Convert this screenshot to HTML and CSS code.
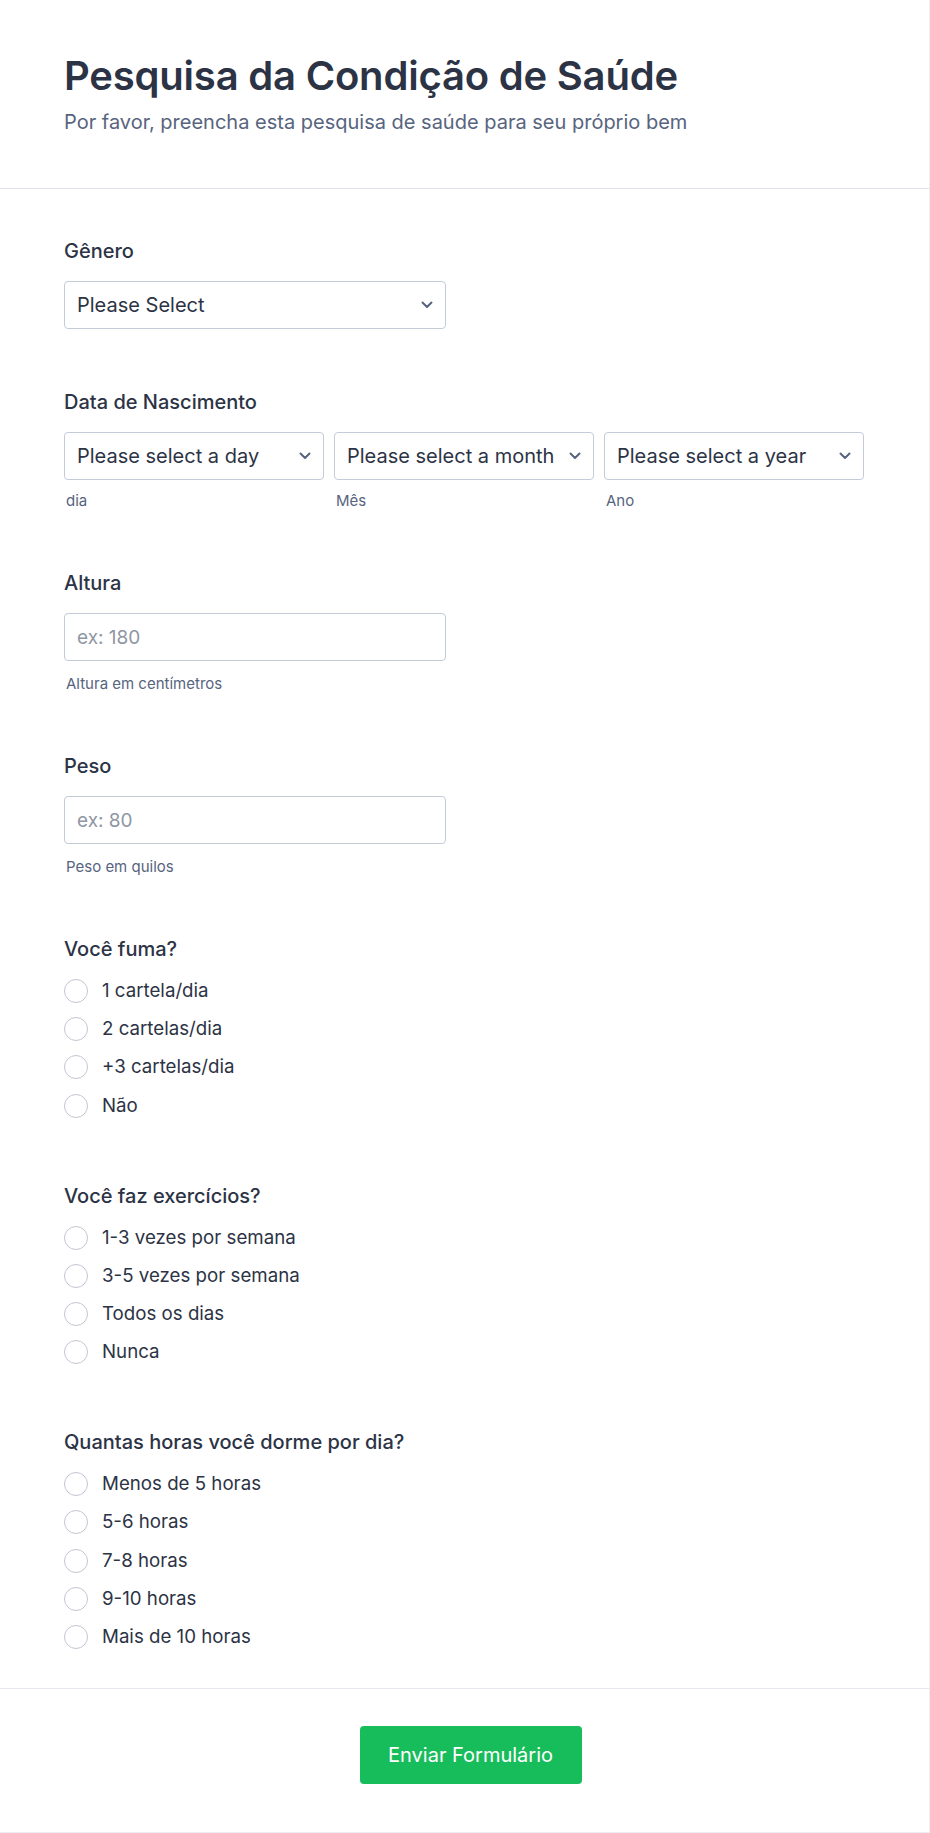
FILE: index.html
```html
<!DOCTYPE html>
<html lang="pt">
<head>
<meta charset="utf-8">
<title>Pesquisa da Condição de Saúde</title>
<link rel="stylesheet" href="styles.css">
</head>
<body>
<div class="card">
  <header class="header">
    <h1 class="title">Pesquisa da Condição de Saúde</h1>
    <p class="subtitle">Por favor, preencha esta pesquisa de saúde para seu próprio bem</p>
  </header>

  <form class="form">
    <div class="q">
      <label class="q-label">Gênero</label>
      <div class="select-wrap w-half">
        <select class="select"><option>Please Select</option></select>
        <svg class="chev" viewBox="0 0 12 8" width="12" height="8"><polyline points="1.5,1.5 6,6 10.5,1.5"/></svg>
      </div>
    </div>

    <div class="q">
      <label class="q-label">Data de Nascimento</label>
      <div class="date-grid">
        <div class="date-col">
          <div class="select-wrap">
            <select class="select"><option>Please select a day</option></select>
            <svg class="chev" viewBox="0 0 12 8" width="12" height="8"><polyline points="1.5,1.5 6,6 10.5,1.5"/></svg>
          </div>
          <span class="sub sub-date">dia</span>
        </div>
        <div class="date-col">
          <div class="select-wrap">
            <select class="select"><option>Please select a month</option></select>
            <svg class="chev" viewBox="0 0 12 8" width="12" height="8"><polyline points="1.5,1.5 6,6 10.5,1.5"/></svg>
          </div>
          <span class="sub sub-date">Mês</span>
        </div>
        <div class="date-col">
          <div class="select-wrap">
            <select class="select"><option>Please select a year</option></select>
            <svg class="chev" viewBox="0 0 12 8" width="12" height="8"><polyline points="1.5,1.5 6,6 10.5,1.5"/></svg>
          </div>
          <span class="sub sub-date">Ano</span>
        </div>
      </div>
    </div>

    <div class="q">
      <label class="q-label">Altura</label>
      <input class="input w-half" type="text" placeholder="ex: 180">
      <span class="sub sub-input">Altura em centímetros</span>
    </div>

    <div class="q">
      <label class="q-label">Peso</label>
      <input class="input w-half" type="text" placeholder="ex: 80">
      <span class="sub sub-input">Peso em quilos</span>
    </div>

    <div class="q">
      <label class="q-label">Você fuma?</label>
      <div class="radios">
        <label class="opt"><span class="radio"></span>1 cartela/dia</label>
        <label class="opt"><span class="radio"></span>2 cartelas/dia</label>
        <label class="opt"><span class="radio"></span>+3 cartelas/dia</label>
        <label class="opt"><span class="radio"></span>Não</label>
      </div>
    </div>

    <div class="q">
      <label class="q-label">Você faz exercícios?</label>
      <div class="radios">
        <label class="opt"><span class="radio"></span>1-3 vezes por semana</label>
        <label class="opt"><span class="radio"></span>3-5 vezes por semana</label>
        <label class="opt"><span class="radio"></span>Todos os dias</label>
        <label class="opt"><span class="radio"></span>Nunca</label>
      </div>
    </div>

    <div class="q">
      <label class="q-label">Quantas horas você dorme por dia?</label>
      <div class="radios">
        <label class="opt"><span class="radio"></span>Menos de 5 horas</label>
        <label class="opt"><span class="radio"></span>5-6 horas</label>
        <label class="opt"><span class="radio"></span>7-8 horas</label>
        <label class="opt"><span class="radio"></span>9-10 horas</label>
        <label class="opt"><span class="radio"></span>Mais de 10 horas</label>
      </div>
    </div>
  </form>

  <footer class="footer">
    <button class="submit" type="button">Enviar Formulário</button>
  </footer>
</div>
</body>
</html>
```

FILE: styles.css
```css
* { box-sizing: border-box; }

html, body {
  margin: 0;
  padding: 0;
  background: #ffffff;
}

body {
  font-family: Inter, "Noto Sans", "Liberation Sans", sans-serif;
  color: #2c3345;
}

.card {
  width: 930px;
  min-height: 1833px;
  border-right: 1px solid #eceef4;
  border-bottom: 1px solid #eceef4;
  display: flex;
  flex-direction: column;
}

.header {
  padding: 52px 64px 52px;
  border-bottom: 1px solid #e1e3ec;
}

.title {
  margin: 0;
  font-size: 40px;
  line-height: 48px;
  font-weight: 600;
  color: #2c3345;
  letter-spacing: -0.2px;
}

.subtitle {
  margin: 8px 0 0;
  font-size: 20px;
  line-height: 28px;
  color: #57647e;
}

.form {
  padding: 50px 64px 34px;
  display: flex;
  flex-direction: column;
  gap: 61px;
}

.q {
  display: flex;
  flex-direction: column;
  align-items: flex-start;
}

.q-label {
  font-size: 20px;
  line-height: 24px;
  font-weight: 500;
  color: #2c3345;
  margin-bottom: 18px;
}

.w-half { width: 382px; }

.select-wrap {
  position: relative;
  width: 100%;
}

.select-wrap.w-half { width: 382px; }

.select {
  appearance: none;
  -webkit-appearance: none;
  width: 100%;
  height: 48px;
  border: 1px solid #c3cad8;
  border-radius: 4px;
  background: #ffffff;
  padding: 0 30px 0 12px;
  font-family: Inter, "Noto Sans", "Liberation Sans", sans-serif;
  font-size: 20px;
  color: #2c3345;
  display: block;
}

.chev {
  position: absolute;
  right: 13px;
  top: 20px;
  fill: none;
  stroke: #57647e;
  stroke-width: 2;
  stroke-linecap: round;
  stroke-linejoin: round;
}

.date-grid {
  width: 800px;
  display: grid;
  grid-template-columns: repeat(3, 1fr);
  gap: 10px;
}

.date-col {
  display: flex;
  flex-direction: column;
}

.sub {
  font-size: 15px;
  line-height: 18px;
  color: #57647e;
  padding-left: 2px;
}

.sub-date { margin-top: 12px; }
.sub-input { margin-top: 14px; }

.input {
  height: 48px;
  border: 1px solid #c3cad8;
  border-radius: 4px;
  padding: 0 12px;
  font-family: Inter, "Noto Sans", "Liberation Sans", sans-serif;
  font-size: 19px;
  color: #2c3345;
  background: #ffffff;
  outline: none;
}

.input::placeholder { color: #8f96a3; }

.radios {
  display: flex;
  flex-direction: column;
  gap: 14.2px;
  padding-bottom: 5px;
}

.opt {
  display: flex;
  align-items: center;
  gap: 14px;
  height: 24px;
  font-size: 18.7px;
  line-height: 24px;
  color: #2c3345;
}

.radio {
  width: 24px;
  height: 24px;
  border: 1.5px solid #c2c6d2;
  border-radius: 50%;
  background: #ffffff;
  flex: none;
}

.footer {
  border-top: 1px solid #e6e7ef;
  padding: 37px 0 0 12px;
  display: flex;
  justify-content: center;
  flex: 1;
}

.submit {
  width: 222px;
  height: 58px;
  border: none;
  border-radius: 4px;
  background: #18bd5b;
  color: #ffffff;
  font-family: Inter, "Noto Sans", "Liberation Sans", sans-serif;
  font-size: 20px;
  font-weight: 400;
}
```
